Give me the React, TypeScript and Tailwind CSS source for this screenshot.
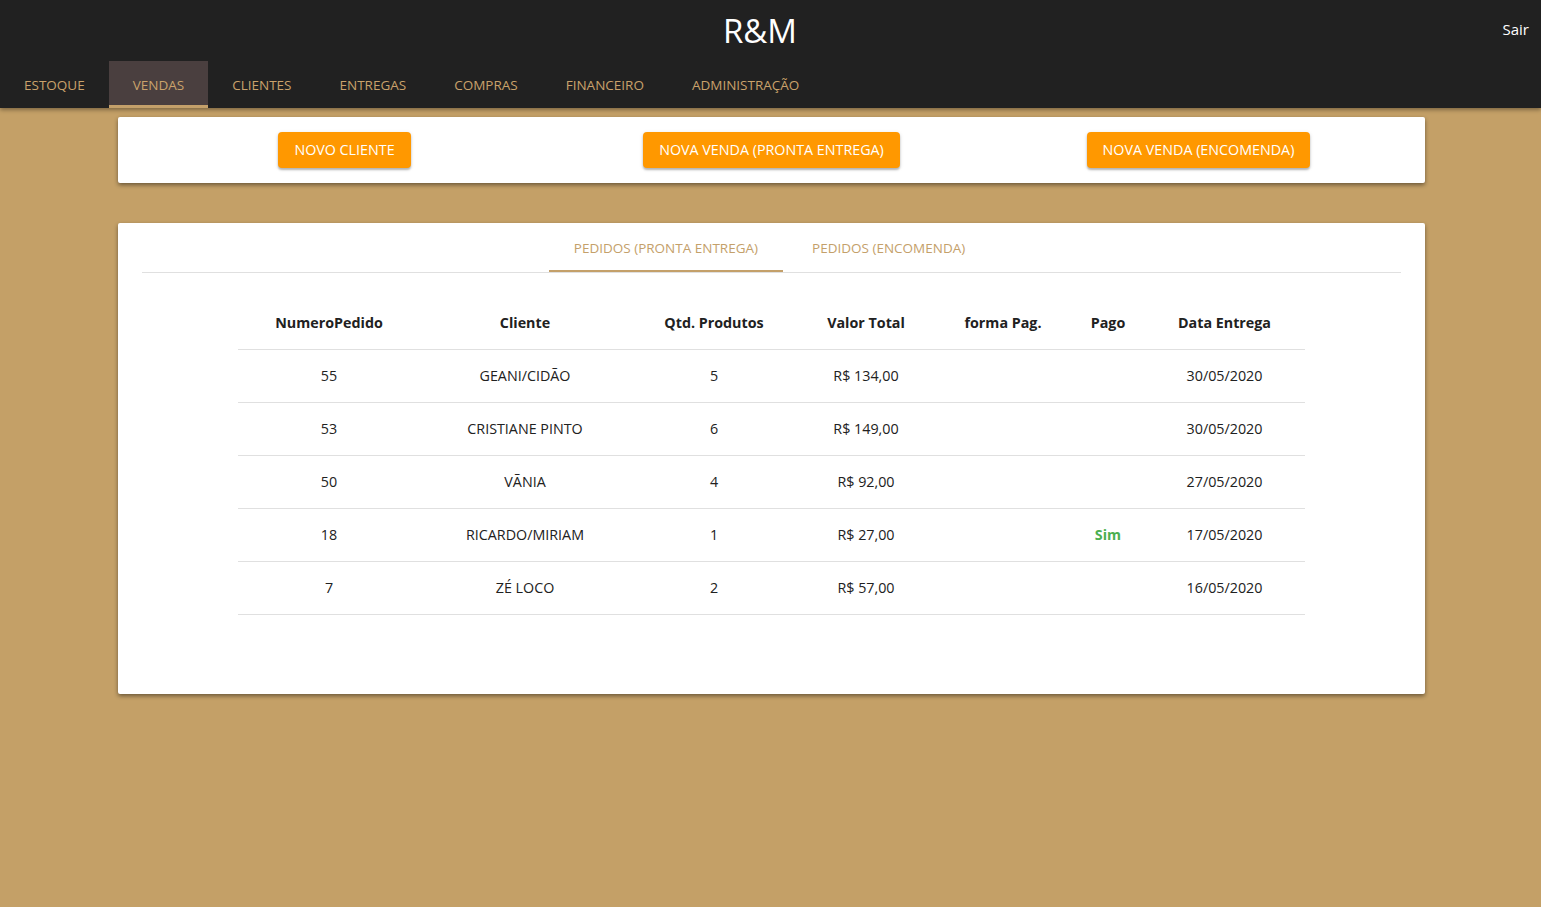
const navItems = ["ESTOQUE", "VENDAS", "CLIENTES", "ENTREGAS", "COMPRAS", "FINANCEIRO", "ADMINISTRAÇÃO"];

const pedidos = [
    { numero: 55, cliente: "GEANI/CIDÃO", qtd: 5, valor: "R$ 134,00", forma: "", pago: "", data: "30/05/2020" },
    { numero: 53, cliente: "CRISTIANE PINTO", qtd: 6, valor: "R$ 149,00", forma: "", pago: "", data: "30/05/2020" },
    { numero: 50, cliente: "VÃNIA", qtd: 4, valor: "R$ 92,00", forma: "", pago: "", data: "27/05/2020" },
    { numero: 18, cliente: "RICARDO/MIRIAM", qtd: 1, valor: "R$ 27,00", forma: "", pago: "Sim", data: "17/05/2020" },
    { numero: 7, cliente: "ZÉ LOCO", qtd: 2, valor: "R$ 57,00", forma: "", pago: "", data: "16/05/2020" },
];

function OrangeButton({ children }: { children: React.ReactNode }) {
    return (
        <button className="h-9 px-4 bg-[#ff9800] text-white text-[14.3px] rounded-[4px] shadow-[0_2px_2px_rgba(0,0,0,0.24),0_1px_4px_rgba(0,0,0,0.12)] uppercase">
            {children}
        </button>
    );
}

export default function App() {
    return (
        <div className="min-h-[907px] bg-[#c4a067] text-[#212121]" style={{ fontFamily: '"Open Sans", "Noto Sans", sans-serif' }}>
            <header className="bg-[#212121] shadow-[0_2px_4px_rgba(0,0,0,0.35)] relative">
                <div className="h-[61px] flex items-center justify-center pr-[21px] relative">
                    <h1 className="text-white text-[33px] leading-none">R&amp;M</h1>
                    <span className="absolute right-3 top-[18px] text-white text-[15px]">Sair</span>
                </div>
                <nav className="flex h-[47px]">
                    {navItems.map((item) => (
                        <div
                            key={item}
                            className={
                                item === "VENDAS"
                                    ? "px-6 flex items-center text-[13.5px] text-[#c9a26b] bg-[#4a3f3f] border-b-[3px] border-[#c4a06a] pt-[5px]"
                                    : "px-6 flex items-center text-[13.5px] text-[#c9a26b] pt-[2px]"
                            }
                        >
                            {item}
                        </div>
                    ))}
                </nav>
            </header>

            <div className="pl-[118px] pr-[116px] pt-[9px]">
                <div className="bg-white rounded-[2px] shadow-[0_2px_4px_rgba(0,0,0,0.45)] h-[66px] px-[13px] grid grid-cols-3 items-center justify-items-center">
                    <OrangeButton>Novo Cliente</OrangeButton>
                    <OrangeButton>Nova Venda (Pronta Entrega)</OrangeButton>
                    <OrangeButton>Nova Venda (Encomenda)</OrangeButton>
                </div>

                <div className="mt-10 bg-white rounded-[2px] shadow-[0_2px_4px_rgba(0,0,0,0.45)] px-6 pb-[79px]">
                    <div className="flex justify-center border-b border-[#e0e0e0] h-[50px]">
                        <div className="px-[25px] flex items-center text-[13.5px] text-[#c4a06a] border-b-2 border-[#c4a06a] pt-[4px]">
                            PEDIDOS (PRONTA ENTREGA)
                        </div>
                        <div className="px-[29px] flex items-center text-[13.5px] text-[#c4a06a] pt-[2px]">
                            PEDIDOS (ENCOMENDA)
                        </div>
                    </div>

                    <div className="pt-[23px] flex justify-center">
                        <table className="w-[1067px] text-[14.3px] text-center border-collapse">
                            <thead>
                                <tr className="h-[53px] border-b border-[#e0e0e0] font-bold">
                                    <th className="w-[182px]">NumeroPedido</th>
                                    <th className="w-[210px]">Cliente</th>
                                    <th className="w-[168px]">Qtd. Produtos</th>
                                    <th className="w-[136px]">Valor Total</th>
                                    <th className="w-[138px]">forma Pag.</th>
                                    <th className="w-[72px]">Pago</th>
                                    <th className="w-[161px]">Data Entrega</th>
                                </tr>
                            </thead>
                            <tbody>
                                {pedidos.map((p) => (
                                    <tr key={p.numero} className="h-[53px] border-b border-[#e0e0e0]">
                                        <td className="pt-px">{p.numero}</td>
                                        <td className="pt-px">{p.cliente}</td>
                                        <td className="pt-px">{p.qtd}</td>
                                        <td className="pt-px">{p.valor}</td>
                                        <td className="pt-px">{p.forma}</td>
                                        <td className="pt-px font-bold text-[#4caf50]">{p.pago}</td>
                                        <td className="pt-px">{p.data}</td>
                                    </tr>
                                ))}
                            </tbody>
                        </table>
                    </div>
                </div>
            </div>
        </div>
    );
}
